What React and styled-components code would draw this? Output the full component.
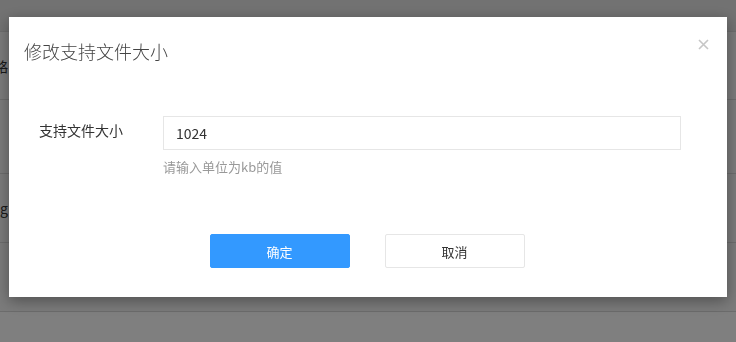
import React from "react";
import styled, { createGlobalStyle } from "styled-components";

const GlobalStyle = createGlobalStyle`
    html, body {
        margin: 0;
        padding: 0;
        background: #ffffff;
        font-family: "Noto Sans CJK SC", "Liberation Sans", sans-serif;
    }
`

const PageBack = styled.div`
    width: 736px;
    height: 342px;
    overflow: hidden;
    background: #ffffff;
`

const TableHead = styled.div`
    height: 32px;
    background: #e4e4e4;
    border-bottom: 1px solid #d9d9d9;
    box-sizing: border-box;
`

const TableRow = styled.div`
    display: flex;
    align-items: center;
    height: ${props => props.$h}px;
    background: #f6f6f6;
    border-bottom: 1px solid #d9d9d9;
    box-sizing: border-box;
`

const ClipCell = styled.div`
    width: 8px;
    overflow: hidden;
    display: flex;
    justify-content: flex-end;
    white-space: nowrap;
    font-size: 14px;
    color: #333;
`

const Overlay = styled.div`
    position: fixed;
    inset: 0;
    background: rgba(0, 0, 0, 0.5);
    display: flex;
    justify-content: center;
    align-items: flex-start;
    padding-top: 17px;
`

const Dialog = styled.div`
    position: relative;
    width: 718px;
    height: 280px;
    background: #ffffff;
    box-shadow: 0 4px 14px rgba(0, 0, 0, 0.35);
    box-sizing: border-box;
    display: flex;
    flex-direction: column;
`

const DialogTitle = styled.h2`
    margin: 0;
    padding: 22px 15px 0;
    font-size: 18px;
    line-height: 24px;
    font-weight: 300;
    color: #444;
`

const CloseButton = styled.button`
    position: absolute;
    top: 19px;
    right: 16px;
    width: 16px;
    height: 16px;
    padding: 0;
    border: none;
    background: none;
    display: flex;
    align-items: center;
    justify-content: center;
    cursor: pointer;
`

const FormBody = styled.div`
    padding: 53px 46px 0 30px;
`

const FormRow = styled.div`
    display: flex;
    align-items: flex-start;
`

const FormLabel = styled.label`
    width: 124px;
    flex-shrink: 0;
    font-size: 14px;
    line-height: 28px;
    color: #333;
`

const FieldCol = styled.div`
    flex: 1;
    display: flex;
    flex-direction: column;
`

const InputPart = styled.input`
    height: 34px;
    box-sizing: border-box;
    border: 1px solid #e6e6e6;
    padding: 0 12px;
    font-family: "Noto Sans CJK SC", "Liberation Sans", sans-serif;
    font-size: 14px;
    color: #333;
    outline: none;
`

const HintText = styled.div`
    margin-top: 8px;
    font-size: 13px;
    line-height: 18px;
    color: #999;
`

const Footer = styled.div`
    display: flex;
    justify-content: center;
    gap: 35px;
    margin-top: 58px;
    padding-right: 2px;
`

const DialogButton = styled.button`
    width: 140px;
    height: 34px;
    box-sizing: border-box;
    border-radius: 2px;
    border: 1px solid ${props => props.$primary ? "#3399ff" : "#e6e6e6"};
    background: ${props => props.$primary ? "#3399ff" : "#ffffff"};
    color: ${props => props.$primary ? "#ffffff" : "#333"};
    font-family: "Noto Sans CJK SC", "Liberation Sans", sans-serif;
    font-size: 13px;
    cursor: pointer;
`

export default function App() {
    return (
        <>
            <GlobalStyle />
            <PageBack>
                <TableHead />
                <TableRow $h={68}><ClipCell>策略</ClipCell></TableRow>
                <TableRow $h={74} />
                <TableRow $h={69}><ClipCell>jpg</ClipCell></TableRow>
                <TableRow $h={69} />
            </PageBack>
            <Overlay>
                <Dialog>
                    <DialogTitle>修改支持文件大小</DialogTitle>
                    <CloseButton aria-label="关闭">
                        <svg width="11" height="11" viewBox="0 0 11 11">
                            <path d="M1 1L10 10M10 1L1 10" stroke="#c6c6c6" strokeWidth="1.6" fill="none" />
                        </svg>
                    </CloseButton>
                    <FormBody>
                        <FormRow>
                            <FormLabel>支持文件大小</FormLabel>
                            <FieldCol>
                                <InputPart type="text" defaultValue="1024" />
                                <HintText>请输入单位为kb的值</HintText>
                            </FieldCol>
                        </FormRow>
                    </FormBody>
                    <Footer>
                        <DialogButton $primary>确定</DialogButton>
                        <DialogButton>取消</DialogButton>
                    </Footer>
                </Dialog>
            </Overlay>
        </>
    );
}
